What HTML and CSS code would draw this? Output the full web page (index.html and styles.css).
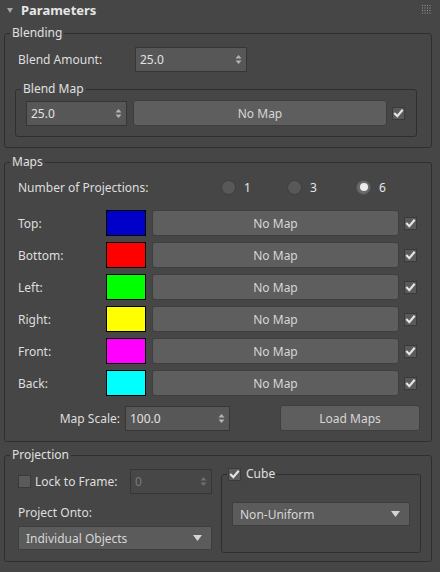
FILE: index.html
```html
<!DOCTYPE html>
<html>
<head>
<meta charset="utf-8">
<link rel="stylesheet" href="styles.css">
</head>
<body>
<div class="panel">
  <div class="header">
    <span class="tri"></span>
    <span class="title">Parameters</span>
    <svg class="grip" width="9" height="9" viewBox="0 0 9 9">
      <g fill="#9a9a9a">
        <rect x="0" y="0" width="1" height="1"/><rect x="2.5" y="0" width="1" height="1"/><rect x="5" y="0" width="1" height="1"/><rect x="7.5" y="0" width="1" height="1"/>
        <rect x="0" y="2.5" width="1" height="1"/><rect x="2.5" y="2.5" width="1" height="1"/><rect x="5" y="2.5" width="1" height="1"/><rect x="7.5" y="2.5" width="1" height="1"/>
        <rect x="0" y="5" width="1" height="1"/><rect x="2.5" y="5" width="1" height="1"/><rect x="5" y="5" width="1" height="1"/><rect x="7.5" y="5" width="1" height="1"/>
        <rect x="0" y="7.5" width="1" height="1"/><rect x="2.5" y="7.5" width="1" height="1"/><rect x="5" y="7.5" width="1" height="1"/><rect x="7.5" y="7.5" width="1" height="1"/>
      </g>
    </svg>
  </div>

  <fieldset class="group g-blending">
    <legend>Blending</legend>
    <div class="blend-amount">
      <span class="lbl-amount">Blend Amount:</span>
      <div class="spinner sp-amount"><span>25.0</span><svg class="arrows" width="7" height="11" viewBox="0 0 7 11"><path d="M0.5 4.5 L3.5 1 L6.5 4.5Z M0.5 6.5 L3.5 10 L6.5 6.5Z"/></svg></div>
    </div>
    <fieldset class="group g-blendmap">
      <legend>Blend Map</legend>
      <div class="blendmap-row">
        <div class="spinner sp-map"><span>25.0</span><svg class="arrows" width="7" height="11" viewBox="0 0 7 11"><path d="M0.5 4.5 L3.5 1 L6.5 4.5Z M0.5 6.5 L3.5 10 L6.5 6.5Z"/></svg></div>
        <div class="mapbtn">No Map</div>
        <svg class="check" width="13" height="13" viewBox="0 0 13 13"><rect x="0.5" y="0.5" width="12" height="12" class="cb-box"/><path d="M3 6.8 L5.3 9.2 L10 3.6" class="cb-mark"/></svg>
      </div>
    </fieldset>
  </fieldset>

  <fieldset class="group g-maps">
    <legend>Maps</legend>
    <div class="proj-row">
      <span class="lbl-proj">Number of Projections:</span>
      <span class="radio r1"><span class="dot"></span>1</span>
      <span class="radio r2"><span class="dot"></span>3</span>
      <span class="radio r3"><span class="dot on"></span>6</span>
    </div>
    <div class="map-rows">
      <div class="map-row"><span class="lbl-side">Top:</span><span class="swatch c-top"></span><div class="mapbtn">No Map</div><svg class="check" width="13" height="13" viewBox="0 0 13 13"><rect x="0.5" y="0.5" width="12" height="12" class="cb-box"/><path d="M3 6.8 L5.3 9.2 L10 3.6" class="cb-mark"/></svg></div>
      <div class="map-row"><span class="lbl-side">Bottom:</span><span class="swatch c-bottom"></span><div class="mapbtn">No Map</div><svg class="check" width="13" height="13" viewBox="0 0 13 13"><rect x="0.5" y="0.5" width="12" height="12" class="cb-box"/><path d="M3 6.8 L5.3 9.2 L10 3.6" class="cb-mark"/></svg></div>
      <div class="map-row"><span class="lbl-side">Left:</span><span class="swatch c-left"></span><div class="mapbtn">No Map</div><svg class="check" width="13" height="13" viewBox="0 0 13 13"><rect x="0.5" y="0.5" width="12" height="12" class="cb-box"/><path d="M3 6.8 L5.3 9.2 L10 3.6" class="cb-mark"/></svg></div>
      <div class="map-row"><span class="lbl-side">Right:</span><span class="swatch c-right"></span><div class="mapbtn">No Map</div><svg class="check" width="13" height="13" viewBox="0 0 13 13"><rect x="0.5" y="0.5" width="12" height="12" class="cb-box"/><path d="M3 6.8 L5.3 9.2 L10 3.6" class="cb-mark"/></svg></div>
      <div class="map-row"><span class="lbl-side">Front:</span><span class="swatch c-front"></span><div class="mapbtn">No Map</div><svg class="check" width="13" height="13" viewBox="0 0 13 13"><rect x="0.5" y="0.5" width="12" height="12" class="cb-box"/><path d="M3 6.8 L5.3 9.2 L10 3.6" class="cb-mark"/></svg></div>
      <div class="map-row"><span class="lbl-side">Back:</span><span class="swatch c-back"></span><div class="mapbtn">No Map</div><svg class="check" width="13" height="13" viewBox="0 0 13 13"><rect x="0.5" y="0.5" width="12" height="12" class="cb-box"/><path d="M3 6.8 L5.3 9.2 L10 3.6" class="cb-mark"/></svg></div>
    </div>
    <div class="scale-row">
      <span class="lbl-scale">Map Scale:</span>
      <div class="spinner sp-scale"><span>100.0</span><svg class="arrows" width="7" height="11" viewBox="0 0 7 11"><path d="M0.5 4.5 L3.5 1 L6.5 4.5Z M0.5 6.5 L3.5 10 L6.5 6.5Z"/></svg></div>
      <div class="mapbtn loadbtn">Load Maps</div>
    </div>
  </fieldset>

  <fieldset class="group g-projection">
    <legend>Projection</legend>
    <div class="proj-cols">
      <div class="proj-left">
        <div class="lock-row">
          <svg class="check" width="13" height="13" viewBox="0 0 13 13"><rect x="0.5" y="0.5" width="12" height="12" class="cb-box"/></svg>
          <span class="lbl-lock">Lock to Frame:</span>
          <div class="spinner sp-lock disabled"><span>0</span><svg class="arrows" width="7" height="11" viewBox="0 0 7 11"><path d="M0.5 4.5 L3.5 1 L6.5 4.5Z M0.5 6.5 L3.5 10 L6.5 6.5Z"/></svg></div>
        </div>
        <div class="lbl-onto">Project Onto:</div>
        <div class="dropdown dd-onto"><span>Individual Objects</span><svg class="ddarrow" width="9" height="6" viewBox="0 0 9 6"><path d="M0 0 L9 0 L4.5 6Z"/></svg></div>
      </div>
      <fieldset class="group g-cube">
        <legend class="cube-legend">
          <svg class="check" width="13" height="13" viewBox="0 0 13 13"><rect x="0.5" y="0.5" width="12" height="12" class="cb-box"/><path d="M3 6.8 L5.3 9.2 L10 3.6" class="cb-mark"/></svg>
          <span>Cube</span>
        </legend>
        <div class="dropdown dd-cube"><span>Non-Uniform</span><svg class="ddarrow" width="9" height="6" viewBox="0 0 9 6"><path d="M0 0 L9 0 L4.5 6Z"/></svg></div>
      </fieldset>
    </div>
  </fieldset>
</div>
</body>
</html>
```

FILE: styles.css
```css
* { box-sizing: border-box; }

body {
  margin: 0;
  background: #464646;
  font-family: "Noto Sans", "Open Sans", sans-serif;
  font-size: 12px;
  color: #dedede;
}

.panel {
  width: 440px;
  height: 572px;
  padding: 0 8px 0 4px;
  overflow: hidden;
}

/* header */
.header {
  height: 20px;
  display: flex;
  align-items: center;
  padding-left: 3px;
}
.tri {
  width: 0;
  height: 0;
  border-left: 3px solid transparent;
  border-right: 3px solid transparent;
  border-top: 5px solid #a6a6a6;
  margin-right: 8px;
}
.title {
  font-weight: bold;
  font-size: 13px;
  color: #e6e6e6;
}
.grip {
  margin-left: auto;
  margin-right: 1px;
  margin-top: -2px;
}

/* group boxes */
.group {
  border: 1px solid #2f2f2f;
  border-radius: 3px;
  margin: 0;
  padding: 0;
  min-inline-size: 0;
}
.group > legend {
  margin-left: 5px;
  padding: 0 2px;
  line-height: 16px;
  height: 16px;
  color: #e0e0e0;
}

.g-blending { margin-top: 5px; }
.g-maps { margin-top: 6px; }
.g-projection { margin-top: 5px; }

/* spinner */
.spinner {
  display: flex;
  align-items: center;
  justify-content: space-between;
  height: 25px;
  background: #575757;
  border: 1px solid #363636;
  padding: 0 4px 0 4px;
  color: #e2e2e2;
}
.arrows { fill: #b4b4b4; flex: none; }
.spinner.disabled {
  background: #474747;
  color: #7a7a7a;
}
.spinner.disabled .arrows { fill: #6e6e6e; }

/* buttons */
.mapbtn {
  display: flex;
  align-items: center;
  justify-content: center;
  height: 26px;
  background: #5e5e5e;
  border: 1px solid #3e3e3e;
  border-radius: 3px;
  color: #d6d6d6;
  flex: 1;
}

/* checkbox */
.check { flex: none; display: block; }
.cb-box { fill: #5a5a5a; stroke: #3a3a3a; stroke-width: 1; }
.cb-mark { fill: none; stroke: #e4e4e4; stroke-width: 2.2; stroke-linecap: square; stroke-linejoin: miter; }

/* blending */
.blend-amount {
  display: flex;
  align-items: center;
  height: 25px;
  margin: 6px 0 0 13px;
}
.lbl-amount { width: 117px; }
.sp-amount { width: 112px; }

.g-blendmap { margin: 9px 14px 10px 10px; }
.blendmap-row {
  display: flex;
  align-items: center;
  gap: 6px;
  margin: 3px 11px 10px 10px;
}
.sp-map { width: 101px; }
.blendmap-row .check { margin-left: -1px; }

/* maps */
.proj-row {
  display: flex;
  align-items: center;
  height: 20px;
  margin: 7px 0 0 13px;
}
.lbl-proj { width: 203px; }
.radio {
  display: flex;
  align-items: center;
  gap: 8px;
  color: #e6e6e6;
}
.r1 { width: 66px; }
.r2 { width: 69px; }
.dot {
  width: 15px;
  height: 15px;
  border-radius: 50%;
  background: #585858;
  border: 1px solid #3d3d3d;
  display: flex;
  align-items: center;
  justify-content: center;
}
.dot.on { background: #6a6a6a; border-color: #505050; }
.dot.on::after {
  content: "";
  width: 8px;
  height: 8px;
  border-radius: 50%;
  background: #ececec;
}

.map-rows {
  display: flex;
  flex-direction: column;
  gap: 6px;
  margin: 13px 14px 0 13px;
}
.map-row {
  display: flex;
  align-items: center;
  height: 26px;
}
.lbl-side { width: 88px; }
.swatch {
  width: 40px;
  height: 26px;
  border: 1px solid #000;
  margin-right: 6px;
  flex: none;
}
.map-row .check { margin-left: 5px; }
.c-top { background: #0000c8; }
.c-bottom { background: #ff0000; }
.c-left { background: #00ff00; }
.c-right { background: #ffff00; }
.c-front { background: #ff00ff; }
.c-back { background: #00ffff; }

.scale-row {
  display: flex;
  align-items: center;
  height: 26px;
  margin: 9px 11px 10px 13px;
}
.lbl-scale { width: 102px; text-align: right; margin-right: 5px; }
.sp-scale { width: 105px; }
.loadbtn { flex: none; width: 140px; margin-left: auto; }

/* projection */
.proj-cols {
  display: flex;
  align-items: flex-start;
  gap: 9px;
  margin: 3px 10px 8px 13px;
}
.proj-left {
  width: 194px;
  padding-top: 3px;
}
.lock-row {
  display: flex;
  align-items: center;
  height: 25px;
}
.lbl-lock { margin-left: 4px; }
.sp-lock { width: 82px; margin-left: auto; }
.lbl-onto {
  margin-top: 11px;
  line-height: 16px;
}
.dropdown {
  display: flex;
  align-items: center;
  justify-content: space-between;
  height: 24px;
  background: #5b5b5b;
  border: 1px solid #3e3e3e;
  padding: 0 9px 0 7px;
  color: #d6d6d6;
}
.ddarrow { fill: #d4d4d4; }
.dd-onto { margin-top: 5px; }

.g-cube { width: 200px; }
.g-cube > legend.cube-legend {
  display: flex;
  align-items: center;
  gap: 5px;
  padding: 0 1px;
  margin-left: 5px;
}
.dd-cube { margin: 20px 10px 26px 10px; }
```
